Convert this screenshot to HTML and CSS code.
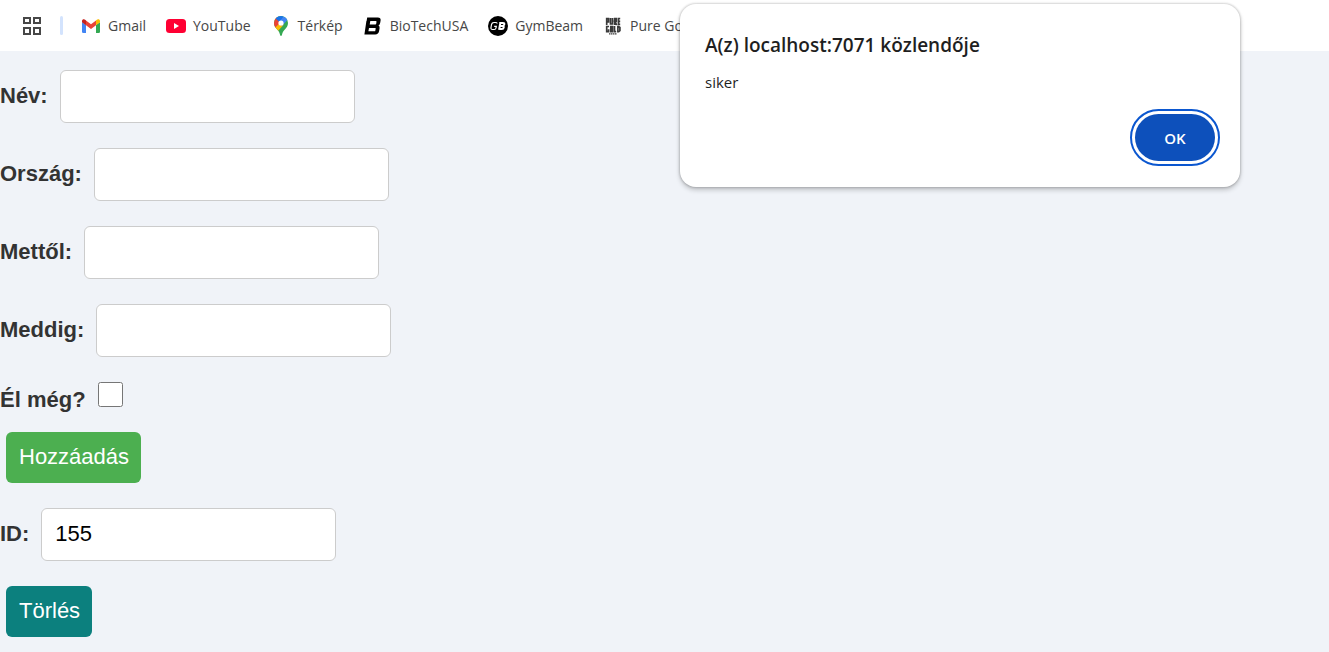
FILE: index.html
```html
<!DOCTYPE html>
<html lang="hu">
<head>
<meta charset="utf-8">
<title>localhost:7071</title>
<link rel="stylesheet" href="styles.css">
</head>
<body>
<nav class="bookmarks" aria-label="Könyvjelzők">
  <button class="apps" type="button" aria-label="Alkalmazások">
    <svg viewBox="0 0 20 20" width="20" height="20" fill="none" stroke="#474747" stroke-width="2"><path d="M2 2h6v5H2zM12 2h6v5h-6zM2 12h6v6H2zM12 12h6v6h-6z"/></svg>
  </button>
  <span class="divider"></span>
  <a class="bookmark" href="#">
    <svg viewBox="0 0 20 20" width="20" height="20"><path fill="#4285f4" d="M1 6l4 3v8H2.300Q1 17 1 15.700z"/><path fill="#34a853" d="M15 9l4-3v9.700Q19 17 17.700 17H15z"/><path fill="#ea4335" d="M5 4.500l5 3.800 5-3.800V9.200l-5 3.900-5-3.900z"/><path fill="#c5221f" d="M1 5.200C1 3.200 3.200 2.800 4.500 4l.5.400v4.800L1 6.300z"/><path fill="#fbbc04" d="M19 5.200c0-2-2.200-2.400-3.500-1.200l-.5.400v4.800l4-2.900z"/></svg>
    <span>Gmail</span>
  </a>
  <a class="bookmark" href="#">
    <svg viewBox="0 0 20 20" width="20" height="20"><rect y="3" width="20" height="14" rx="3.500" fill="#ff0033"/><path fill="#fff" d="M8 7l5 3-5 3z"/></svg>
    <span>YouTube</span>
  </a>
  <a class="bookmark" href="#">
    <svg viewBox="0 0 20 20" width="20" height="20"><defs><clipPath id="pin"><path d="M10 0a7 7 0 0 1 7 7c0 3-1.500 4.700-3.400 6.700-1.600 1.800-2.300 3.400-2.700 5.200-.3 1.400-1.500 1.400-1.800 0-.4-1.800-1.100-3.400-2.700-5.200C4.500 11.700 3 10 3 7a7 7 0 0 1 7-7z"/></clipPath></defs><g clip-path="url(#pin)"><path fill="#34a853" d="M0 0h20v20H0z"/><path fill="#fbbc04" d="M3 12L10 4l2.500 5L6 16H2z"/><path fill="#ea4335" d="M0 0h5l5 6-6.200 6L0 9z"/><path fill="#1a73e8" d="M4.600 2.500L9 6.500l3-3V0H6z"/><path fill="#4285f4" d="M7 0h10l-.6 4L11 10 8 6l5-6z"/></g><circle cx="10" cy="7" r="2.600" fill="#fff"/></svg>
    <span>Térkép</span>
  </a>
  <a class="bookmark" href="#">
    <svg viewBox="0 0 20 20" width="20" height="20"><path fill="#000" fill-rule="evenodd" d="M4.200 1.600h10.600q3.200 0 2.800 2.900l-.4 2.300q-.3 1.900-1.700 2.700 1.400.8 1.100 2.800l-.5 2.700q-.6 3.400-3.900 3.400H1.400L3.400 5H3.600zM7.300 5l-.6 3.500h5.700q.7 0 .8-.7l.3-2.100q.1-.7-.6-.7zM6 12l-.6 3.200h6.300q.5 0 .6-.5l.4-2.100q.1-.6-.5-.6z"/></svg>
    <span>BioTechUSA</span>
  </a>
  <a class="bookmark" href="#">
    <svg viewBox="0 0 20 20" width="20" height="20"><circle cx="10" cy="10" r="10"/><path fill="none" stroke="#fff" stroke-width="1.200" d="M9.200 7.500Q9 6.500 7.500 6.500h-1.500Q4 6.500 3.500 8.500L3 11.500q-.3 2 1.500 2h1.700q1.500 0 1.800-1.500l.3-1.600H6.200"/><path fill="none" stroke="#fff" stroke-width="2" d="M12.300 6.900h2.600q1.700 0 1.400 1.500t-1.900 1.500h-2.700 2.800q1.500 0 1.200 1.600t-1.900 1.600h-2.500zM12.300 6.900l-1.100 6.200"/></svg>
    <span>GymBeam</span>
  </a>
  <a class="bookmark" href="#">
    <svg viewBox="0 0 20 20" width="20" height="20" fill="none" stroke="#3a3a3a" stroke-width="1.700"><path d="M3.700 9V2.500h1.800v3.300H3.700M7.500 2v6h2V2M11.700 9V2.500h1.600v3h-1.600l2 3.500M17.200 2.500h-1.700v5.800h1.700M15.500 5.400h1.700M6 10.500H3.700v5.200h1.900v-2.500M7.800 10.500h1.700v5.200H7.800zM11.500 10v5.700h1.700M14.900 10.500h.8l1.200 1v3.200l-1.200 1h-.8z"/><path d="M6 17.800h8" stroke-width="1.200" stroke-dasharray="1.500 .5"/></svg>
    <span>Pure Gold</span>
  </a>
</nav>

<main class="page">
  <form class="form">
    <div class="row"><label for="name">Név:</label><input class="field" id="name" type="text"></div>
    <div class="row"><label for="country">Ország:</label><input class="field" id="country" type="text"></div>
    <div class="row"><label for="from">Mettől:</label><input class="field" id="from" type="text"></div>
    <div class="row"><label for="to">Meddig:</label><input class="field" id="to" type="text"></div>
    <div class="row row-check"><label for="alive">Él még?</label><input class="check" id="alive" type="checkbox"></div>
    <button class="action add" type="button">Hozzáadás</button>
    <div class="row"><label for="id">ID:</label><input class="field" id="id" type="text" value="155"></div>
    <button class="action delete" type="button">Törlés</button>
  </form>
</main>

<div class="dialog" role="alertdialog" aria-labelledby="dialog-title" aria-describedby="dialog-text">
  <h1 class="dialog-title" id="dialog-title">A(z) localhost:7071 közlendője</h1>
  <p class="dialog-text" id="dialog-text">siker</p>
  <button class="ok" type="button">OK</button>
</div>
</body>
</html>
```

FILE: styles.css
```css
* { box-sizing: border-box; }

body {
  margin: 0;
  min-height: 100vh;
  background: #f0f3f8;
  color: #333;
  font-family: "Liberation Sans", Arial, sans-serif;
  font-size: 22px;
  overflow-x: hidden;
}

.bookmarks {
  display: flex;
  align-items: center;
  height: 51px;
  padding-left: 22px;
  background: #fff;
  overflow: hidden;
}

.apps {
  display: flex;
  padding: 0;
  border: 0;
  background: none;
}

.divider {
  width: 3px;
  height: 19px;
  margin: 0 18px;
  border-radius: 2px;
  background: #d3e3fd;
}

.bookmark {
  display: flex;
  align-items: center;
  gap: 7px;
  margin-right: 20px;
  color: #474747;
  font: 14px/20px "Open Sans", sans-serif;
  text-decoration: none;
  white-space: nowrap;
}

.bookmark svg { flex: none; }

.form {
  display: flex;
  flex-direction: column;
  align-items: flex-start;
  padding: 19px 0 15px;
}

.row {
  display: flex;
  align-items: center;
  gap: 12px;
  margin-bottom: 25px;
  font-weight: bold;
  line-height: 25px;
}

.row label { padding-bottom: 2px; }

.field {
  width: 295px;
  height: 53px;
  padding: 12px 13px 14px;
  border: 1px solid #ccc;
  border-radius: 6px;
  background: #fff;
  color: #000;
  font: 22px/25px "Liberation Sans", Arial, sans-serif;
}

.row-check {
  align-items: baseline;
  margin-bottom: 18px;
}

.check {
  width: 25px;
  height: 25px;
  margin: 0;
}

.action {
  height: 51px;
  margin: 0 6px 25px;
  padding: 0 12px 2px 13px;
  border: 0;
  border-radius: 6px;
  color: #fff;
  font: 22px/25px "Liberation Sans", Arial, sans-serif;
}

.add { background: #4caf50; }

.delete {
  margin-bottom: 0;
  background: #0c807e;
}

.dialog {
  position: absolute;
  top: 4px;
  right: 89px;
  display: flex;
  flex-direction: column;
  width: 560px;
  padding: 28px 25px 26px;
  border-radius: 16px;
  background: #fff;
  color: #1f1f1f;
  font-family: "Open Sans", sans-serif;
  box-shadow: 0 0 2px 1px rgba(0, 0, 0, 0.15), 0 3px 5px rgba(0, 0, 0, 0.2);
}

.dialog-title {
  margin: 0;
  font-size: 19px;
  font-weight: 600;
  line-height: 26px;
}

.dialog-text {
  margin: 14px 0 21px;
  font-size: 15px;
  line-height: 21px;
}

.ok {
  align-self: flex-end;
  width: 80px;
  height: 47px;
  padding: 0;
  border: 0;
  border-radius: 24px;
  outline: 2px solid #0b57d0;
  outline-offset: 3px;
  background: #0d50bb;
  color: #fff;
  font: 600 15px/20px "Open Sans", sans-serif;
}
```
